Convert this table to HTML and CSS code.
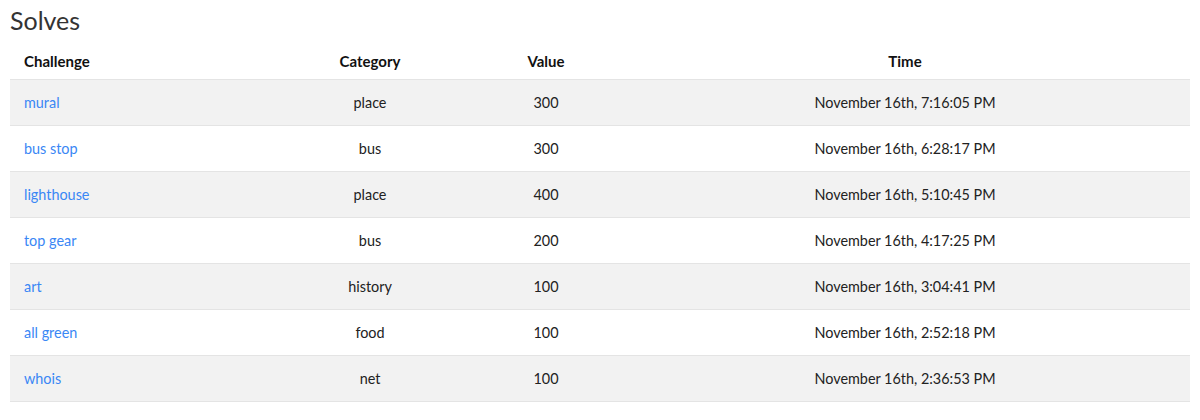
FILE: index.html
```html
<!DOCTYPE html>
<html>
<head>
<meta charset="utf-8">
<link rel="stylesheet" href="styles.css">
</head>
<body>
<div class="page">
  <h2 class="title">Solves</h2>
  <table class="solves">
    <colgroup>
      <col class="c-chal"><col class="c-cat"><col class="c-val"><col class="c-time">
    </colgroup>
    <thead>
      <tr><th class="left">Challenge</th><th>Category</th><th>Value</th><th>Time</th></tr>
    </thead>
    <tbody>
      <tr><td class="left"><a href="#">mural</a></td><td>place</td><td>300</td><td>November 16th, 7:16:05 PM</td></tr>
      <tr><td class="left"><a href="#">bus stop</a></td><td>bus</td><td>300</td><td>November 16th, 6:28:17 PM</td></tr>
      <tr><td class="left"><a href="#">lighthouse</a></td><td>place</td><td>400</td><td>November 16th, 5:10:45 PM</td></tr>
      <tr><td class="left"><a href="#">top gear</a></td><td>bus</td><td>200</td><td>November 16th, 4:17:25 PM</td></tr>
      <tr><td class="left"><a href="#">art</a></td><td>history</td><td>100</td><td>November 16th, 3:04:41 PM</td></tr>
      <tr><td class="left"><a href="#">all green</a></td><td>food</td><td>100</td><td>November 16th, 2:52:18 PM</td></tr>
      <tr><td class="left"><a href="#">whois</a></td><td>net</td><td>100</td><td>November 16th, 2:36:53 PM</td></tr>
    </tbody>
  </table>
</div>
</body>
</html>
```

FILE: styles.css
```css
html, body {
  margin: 0;
  padding: 0;
  background: #ffffff;
}
body {
  font-family: Lato, "Open Sans", sans-serif;
  color: #222222;
}
.page {
  padding: 0 10px;
}
.title {
  margin: 0;
  padding-top: 5px;
  height: 37px;
  font-size: 25px;
  font-weight: 400;
  line-height: 30px;
  color: #333333;
}
.solves {
  width: 100%;
  border-collapse: collapse;
  font-size: 14.4px;
}
.c-chal { width: 258px; }
.c-cat { width: 204px; }
.c-val { width: 148px; }
.c-time { width: 570px; }
.solves th {
  height: 37px;
  padding: 0 14px;
  font-size: 15px;
  font-weight: 700;
  text-align: center;
  color: #111111;
  vertical-align: middle;
}
.solves td {
  height: 45px;
  padding: 0 14px;
  text-align: center;
  vertical-align: middle;
  border-top: 1px solid #e4e4e4;
}
.solves tbody tr:last-child td {
  border-bottom: 1px solid #e4e4e4;
}
.solves .left {
  text-align: left;
}
.solves tbody tr:nth-child(odd) td {
  background: #f2f2f2;
}
.solves a {
  color: #3a87f5;
  text-decoration: none;
}
```
